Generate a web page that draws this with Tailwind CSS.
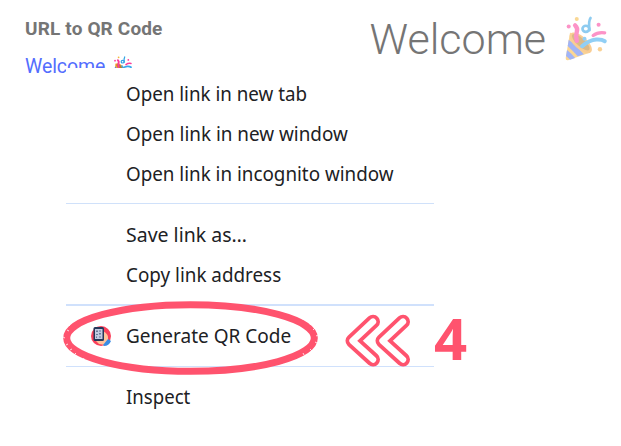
<!DOCTYPE html>
<html lang="en">
<head>
<meta charset="utf-8">
<title>URL to QR Code</title>
<script src="https://cdn.jsdelivr.net/npm/@tailwindcss/browser@4"></script>
</head>
<body class="relative h-[446px] w-[621px] overflow-hidden bg-white font-['Noto_Sans',sans-serif]">
<svg class="hidden">
  <symbol id="party" viewBox="45 18 126 134">
    <path d="M62 67 49 143q-1 8 7 7l66-23q-1-13-22-30T62 67Z" fill="#f9b53c"/>
    <path d="m58 89-3 18q18 17 30 31l18-6Q84 109 58 89Z" fill="#5577f0"/>
    <path d="m53 119-3 18q8 6 12 11l15-5q-10-13-24-24Z" fill="#5577f0"/>
    <ellipse cx="94" cy="98" rx="41" ry="19" transform="rotate(42 94 98)" fill="#f5a53b"/>
    <ellipse cx="94" cy="96" rx="34" ry="12" transform="rotate(42 94 96)" fill="#bd8029"/>
    <path d="M77 46q9 8 5 20-4 12 0 26" fill="none" stroke="#fb3c9b" stroke-width="13" stroke-linecap="round"/>
    <path d="M98 108q20-18 42-20 17-1 25 5" fill="none" stroke="#39a9ed" stroke-width="12" stroke-linecap="round"/>
    <path d="M131 76q14-11 34-8" fill="none" stroke="#fb3c9b" stroke-width="10" stroke-linecap="round"/>
    <path d="M123 24q-7 10-3 36" fill="none" stroke="#31a2e4" stroke-width="8" stroke-linecap="round"/>
    <ellipse cx="109" cy="56" rx="10" ry="9" fill="none" stroke="#31a2e4" stroke-width="8"/>
    <circle cx="82" cy="27" r="6" fill="#f5b83d"/>
    <circle cx="58" cy="49" r="6" fill="#fb3c9b"/>
    <circle cx="147" cy="44" r="6" fill="#fb3c9b"/>
    <circle cx="151" cy="117" r="6.500" fill="#f5ad3d"/>
    <circle cx="105" cy="86" r="6" fill="#39a9ed"/>
  </symbol>
</svg>

<div class="flex justify-between pr-[14px] pl-[25px] font-[Roboto,sans-serif]">
  <div class="pt-[16px]">
    <h2 class="text-[19px] leading-[25px] font-bold tracking-[0.15px] whitespace-nowrap text-[#757575]">URL to QR Code</h2>
    <a class="mt-[13px] flex items-start text-[19.5px] leading-[26px] font-normal text-[#536dfe]">
      <span class="w-[80px] tracking-[-0.1px]">Welcome</span>
      <svg class="mt-[2px] ml-[8px] h-[20px] w-[19px]"><use href="#party"/></svg>
    </a>
  </div>
  <h1 class="flex pt-[14px] text-[43px] leading-[50px] font-light text-[#757575]">
    <span>Welcome</span>
    <svg class="mt-[2px] ml-[18px] h-[45px] w-[43px] opacity-55"><use href="#party"/></svg>
  </h1>
</div>

<div class="absolute top-[68px] left-[66px] flex h-[378px] w-[368px] flex-col bg-white pt-[6px] text-[20px] leading-[40px] whitespace-nowrap text-[#202124]">
  <div class="h-[40px] pl-[60px]"><span class="inline-block origin-left scale-x-[.938]">Open link in new tab</span></div>
  <div class="h-[40px] pl-[60px]"><span class="inline-block origin-left scale-x-[.943]">Open link in new window</span></div>
  <div class="h-[40px] pl-[60px]"><span class="inline-block origin-left scale-x-[.94]">Open link in incognito window</span></div>
  <div class="mt-[9px] mb-[11px] h-px shrink-0 bg-[#d0e1fa]"></div>
  <div class="h-[40px] pl-[60px]"><span class="inline-block origin-left scale-x-[.975]">Save link as…</span></div>
  <div class="h-[40px] pl-[60px]"><span class="inline-block origin-left scale-x-[.942]">Copy link address</span></div>
  <div class="mt-[9px] mb-[10px] h-[2px] shrink-0 bg-[#d0e1fc]"></div>
  <div class="flex h-[40px] pl-[25px]">
    <svg class="mt-[10px] mr-[15px] h-[20px] w-[20px]" viewBox="0 0 20 20">
      <circle cx="10" cy="10" r="10" fill="#fb405b"/>
      <path d="M12 5q6 3 5 9l-3 5-6-1-3-3Z" fill="#ffc49b"/>
      <path d="m12 19 5-6 3 2q-2 5-7 5Z" fill="#398ce4"/>
      <rect x="2.500" y="1" width="10.500" height="14" rx="1.500" fill="#263759"/>
      <path d="M4 3h7.500v10H4Z" fill="#c2cbe2"/>
      <path d="M5 4.500h2v1.500H5Zm3 0h2v1H8ZM5 8h2v1H5ZM8 7h2v1.500H8Zm-3 3.500h1V12H5Zm3 0h2v1H8Z" fill="#6a7898"/>
    </svg>
    <span class="inline-block origin-left scale-x-[.95]">Generate QR Code</span>
  </div>
  <div class="mt-[10px] mb-[10px] h-px shrink-0 bg-[#d0e1fc]"></div>
  <div class="h-[40px] pl-[60px]"><span class="inline-block origin-left scale-x-[.93]">Inspect</span></div>
</div>

<svg class="absolute top-[298px] left-[60px] h-[80px] w-[262px]" viewBox="60 298 262 80" fill="none">
  <ellipse cx="190.500" cy="338" rx="123.800" ry="33.300" stroke="#ff536e" stroke-width="7"/>
  <path d="m63 337 2 1m2-8 2 1m-1-7 2 2m2-6 1 2m-5 22-2 1m6 4-2 1m6 3-2 2m10 3-1 2M316 336l2-1m-5-5 2-2m-5-3 2-3m-9-2 1-3m11 25 2 1m-7 6 2 2m-9 2 1 2" stroke="#fff" stroke-width=".8"/>
</svg>

<svg class="absolute top-[313px] left-[343px] h-[56px] w-[70px]" viewBox="343 313 70 56" fill="none" stroke-linecap="round" stroke-linejoin="round">
  <g stroke="#ff536e" stroke-width="14">
    <path d="m373 321.700-20.500 19.100 20.500 18.700"/>
    <path d="m403 321.700-20.500 19.100 20.500 18.700"/>
  </g>
  <g stroke="#fff" stroke-width="6.400">
    <path d="m373 321.700-20.500 19.100 20.500 18.700"/>
    <path d="m403 321.700-20.500 19.100 20.500 18.700"/>
  </g>
</svg>
<div class="absolute top-[308px] left-[434px] text-[58px] leading-[60px] font-bold text-[#ff536e]">4</div>
</body>
</html>
